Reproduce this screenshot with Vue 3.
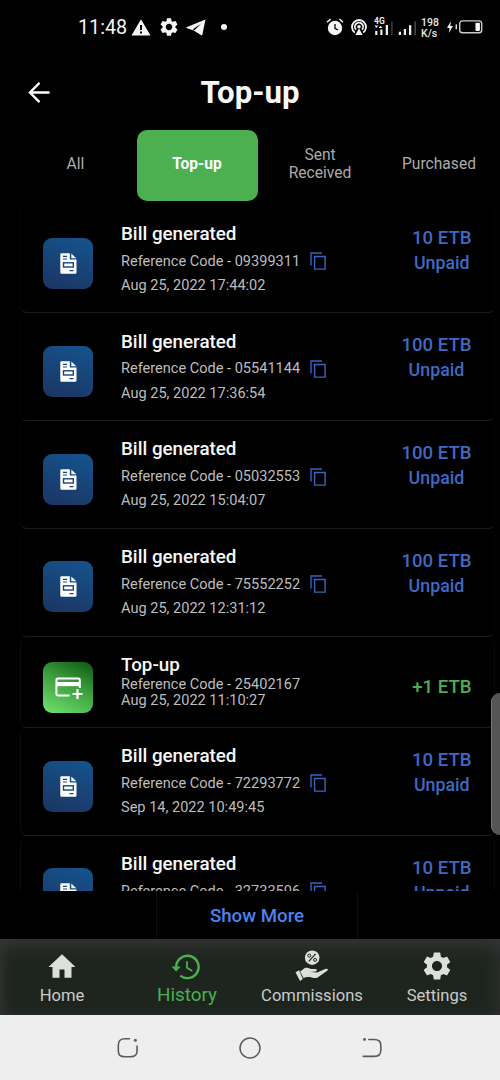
<script setup>
const bill = (code, date, amount) => ({ title: 'Bill generated', code, date, amount, unpaid: true })
const items = [
  bill('09399311', 'Aug 25, 2022 17:44:02', '10 ETB'),
  bill('05541144', 'Aug 25, 2022 17:36:54', '100 ETB'),
  bill('05032553', 'Aug 25, 2022 15:04:07', '100 ETB'),
  bill('75552252', 'Aug 25, 2022 12:31:12', '100 ETB'),
  { title: 'Top-up', code: '25402167', date: 'Aug 25, 2022 11:10:27', amount: '+1 ETB', unpaid: false },
  bill('72293772', 'Sep 14, 2022 10:49:45', '10 ETB'),
  bill('32733506', '', '10 ETB'),
]
const gear = 'M19.14 12.94c.04-.3.06-.61.06-.94 0-.32-.02-.64-.07-.94l2.03-1.58c.18-.14.23-.41.12-.61l-1.92-3.32c-.12-.22-.37-.29-.59-.22l-2.39.96c-.5-.38-1.03-.7-1.62-.94l-.36-2.54c-.04-.24-.24-.41-.48-.41h-3.84c-.24 0-.43.17-.47.41l-.36 2.54c-.59.24-1.13.57-1.62.94l-2.39-.96c-.22-.08-.47 0-.59.22L2.74 8.87c-.12.21-.08.47.12.61l2.03 1.58c-.05.3-.09.63-.09.94s.02.64.07.94l-2.03 1.58c-.18.14-.23.41-.12.61l1.92 3.32c.12.22.37.29.59.22l2.39-.96c.5.38 1.03.7 1.62.94l.36 2.54c.05.24.24.41.48.41h3.84c.24 0 .44-.17.47-.41l.36-2.54c.59-.24 1.13-.56 1.62-.94l2.39.96c.22.08.47 0 .59-.22l1.92-3.32c.12-.22.07-.47-.12-.61l-2.01-1.58z'
const hole = 'M12 15.6c-1.98 0-3.6-1.62-3.6-3.6s1.62-3.6 3.6-3.6 3.6 1.62 3.6 3.6-1.62 3.6-3.6 3.6z'
</script>

<template>
  <main class="screen">
    <div class="status">
      <span class="clock">11:48</span>
      <svg class="warn" viewBox="0 0 20 17"><path d="M10 0.3 19.5 16.5H.5Z" fill="#f5f5f5" /><path d="M9 6h2v5H9zM9 12.5h2v2H9z" fill="#000" /></svg>
      <svg class="sgear" viewBox="2 2 20 20"><path :d="gear + hole" fill="#f5f5f5" fill-rule="evenodd" /></svg>
      <svg class="plane" viewBox="0 0 20 17"><path d="M.4 8.3 19.5.5 16.4 15.4c-.2.9-.8 1.1-1.5.7L7.2 11.2 1 9.2C.2 9 .1 8.5.4 8.3Z" fill="#f5f5f5" /><path d="m6.8 10.2 8.2-5.4-6.4 6.4Z" fill="#000" /></svg>
      <i class="dot"></i>
      <span class="space"></span>
      <svg class="alarm" viewBox="0 0 18 18"><circle cx="9" cy="10" r="7.2" fill="#f5f5f5" /><path d="M1 4.2 4.6 1M17 4.2 13.4 1" stroke="#f5f5f5" stroke-width="1.5" /><path d="M9 6v4.3l3 1.7" fill="none" stroke="#000" stroke-width="1.3" /></svg>
      <svg class="hotspot" viewBox="0 0 18 18"><path d="M4.8 14.6A7 7 0 1 1 13.2 14.6M6.1 11.7A4.1 4.1 0 1 1 11.9 11.7" fill="none" stroke="#f5f5f5" stroke-width="1.8" /><path d="M9 10.6 12.7 17H5.3Z" fill="#f5f5f5" /><circle cx="9" cy="8.7" r="1.8" fill="#f5f5f5" /></svg>
      <svg class="signal1" viewBox="0 0 19 18"><text x="0" y="5.5">4G</text><path d="M.4 7.6h4l-2 2.3zM4.5 10l2-2.3 2 2.3z" fill="#eee" /><path d="M1.2 13h2.2v4H1.2zM6.3 11.5h2.2V17H6.3zM11.7 7H14v10h-2.3z" fill="#eee" /><path d="M17 3.5h1.8V17H17z" fill="#333" /></svg>
      <svg class="signal2" viewBox="0 0 19 18"><path d="M.7 13.8H3V17H.7zM5.8 11H8v6H5.8zM11 7.2h2.3V17H11z" fill="#eee" /><path d="M16.3 3.5h1.7V17h-1.7z" fill="#444" /></svg>
      <span class="speed">198<br>K/s</span>
      <svg class="battery" viewBox="0 0 37 14"><path d="M4.9 1 1 8h2.6L2.7 13 7 6H4.3Z" fill="#eee" /><path d="M10.3 4.4v4.8" stroke="#ddd" stroke-width="1.5" /><rect x="13.7" y=".9" width="22" height="11.8" rx="2.8" fill="none" stroke="#ccc" stroke-width="1.4" /><rect x="29.5" y="2.7" width="4.4" height="8.2" rx=".8" fill="#fff" /></svg>
    </div>

    <header class="head">
      <svg class="back" viewBox="0 0 24 24"><path d="M22.5 12H2M12 2 2 12l10 10" fill="none" stroke="#fff" stroke-width="2.4" /></svg>
      <h1>Top-up</h1>
    </header>

    <nav class="tabs">
      <span class="tab">All</span>
      <span class="tab active">Top-up</span>
      <span class="tab sent">Sent<br>Received</span>
      <span class="tab">Purchased</span>
    </nav>

    <section class="list">
      <article v-for="(t, i) in items" :key="t.code" class="card" :class="{ topup: !t.unpaid, green: i > 3 }">
        <div class="tile">
          <svg v-if="t.unpaid" class="doc" viewBox="0 0 17 21">
            <path d="M1.6.3h8.2v6.2h6.7v12.9a1.3 1.3 0 0 1-1.3 1.3H1.6A1.3 1.3 0 0 1 .3 19.4V1.6A1.3 1.3 0 0 1 1.6.3Z" fill="#fff" />
            <path d="M11.3.6 16.3 5.2h-5Z" fill="#fff" />
            <path d="M3 3.4h4M3 6h4M9.5 17.7h4" stroke="#1d4472" stroke-width="1.2" />
            <rect x="3.5" y="9.8" width="9.8" height="4.2" fill="none" stroke="#1d4472" stroke-width="1.4" />
          </svg>
          <svg v-else class="addcard" viewBox="0 0 28 23">
            <path d="M14.6 18.5H2.8a1.4 1.4 0 0 1-1.4-1.4V2.8a1.4 1.4 0 0 1 1.4-1.4h20.6a1.4 1.4 0 0 1 1.4 1.4V11" fill="none" stroke="#fff" stroke-width="2" />
            <path d="M1 5h24v4.2H1z" fill="#fff" />
            <path d="M22.5 12v10M17.5 17h10" stroke="#fff" stroke-width="2.2" />
          </svg>
        </div>
        <div class="info">
          <h2>{{ t.title }}</h2>
          <p>Reference Code - {{ t.code }}
            <svg v-if="t.unpaid" class="copy" viewBox="0 0 16 18"><path d="M1 13.5V1h11M4.6 4.5h10.5v12.6H4.6z" fill="none" stroke="#3b63c0" stroke-width="1.4" /></svg>
          </p>
          <p v-if="t.date">{{ t.date }}</p>
        </div>
        <div class="amount">
          <span>{{ t.amount }}</span>
          <span v-if="t.unpaid" class="state">Unpaid</span>
        </div>
      </article>
    </section>

    <div class="more"><button>Show More</button></div>

    <nav class="bottom">
      <div class="item">
        <svg class="home" viewBox="0 0 28 24"><path d="M14 .3 27.5 13h-4v10.7h-7v-8.2h-5v8.2h-7V13h-4Z" fill="#dcdfdc" /></svg>
        <span>Home</span>
      </div>
      <div class="item current">
        <svg class="history" viewBox="0 0 30 26"><path d="M5.2 13A11.2 11.2 0 1 1 9.3 21.6" fill="none" stroke="#4caf50" stroke-width="2.4" /><path d="M.5 12.6h9.2l-4.6 5Z" fill="#4caf50" /><path d="M16 7.2v6.5l5.3 3.2" fill="none" stroke="#4caf50" stroke-width="1.8" /></svg>
        <span>History</span>
      </div>
      <div class="item">
        <svg class="hand" viewBox="0 0 34 32">
          <circle cx="17.2" cy="7.7" r="7.3" fill="#dcdfdc" />
          <path d="m13.8 11.4 6.8-7.5" stroke="#1f2520" stroke-width="1.2" /><circle cx="14.3" cy="5.6" r="1.5" fill="none" stroke="#1f2520" /><circle cx="20.1" cy="9.9" r="1.5" fill="none" stroke="#1f2520" />
          <path d="M.5 22.3 4.2 20.3 7.8 28.9 5 30.9Z" fill="#dcdfdc" />
          <path d="M5.2 21.6 9.8 18c2.2-.6 4.3.3 6.3 1h4.4c1.8 0 1.8 2.2.1 2.5l-5.2.6 6.8.5L30.2 19c2.1-.8 3.7.5 2 1.8L22.6 27.5c-2 1.2-5 .4-8-.4-2.3-.5-4 .1-6.1.8Z" fill="#dcdfdc" />
        </svg>
        <span>Commissions</span>
      </div>
      <div class="item">
        <svg class="cog" viewBox="2 2 20 20"><path :d="gear + hole" fill="#dcdfdc" fill-rule="evenodd" /></svg>
        <span>Settings</span>
      </div>
    </nav>

    <div class="system">
      <svg viewBox="0 0 22 22"><path d="M12.5 1.8H8.2C3 1.8 1.3 4 1.3 8.4v5.1c0 4.8 1.8 6.2 6.7 6.2h5.3c4.9 0 6.8-1.5 6.8-6.3V9" fill="none" stroke="#5b5b5b" stroke-width="1.6" stroke-linecap="round" /><circle cx="18.4" cy="3.3" r="1.5" fill="#5b5b5b" /></svg>
      <svg viewBox="0 0 22 22"><circle cx="11" cy="11" r="10" fill="none" stroke="#5b5b5b" stroke-width="1.5" /></svg>
      <svg viewBox="0 0 22 22"><path d="M7.8 2.5h5.3c4.5 0 6.7 1.8 6.7 5.6v5.1c0 4.2-2.2 6.2-6.7 6.2H2.2" fill="none" stroke="#5b5b5b" stroke-width="1.6" stroke-linecap="round" /><circle cx="3.5" cy="2.5" r="1.4" fill="#5b5b5b" /></svg>
    </div>
    <div class="edge"></div>
  </main>
</template>

<style>
body { margin: 0; background: #000; }
</style>

<style scoped>
* { box-sizing: border-box; }
svg { display: block; flex: none; }
.screen { position: relative; width: 500px; height: 1080px; overflow: hidden; display: flex; flex-direction: column; background: #000; color: #fff; font-family: Roboto, sans-serif; }
.status { height: 54px; display: flex; align-items: center; padding: 0 17px 0 78px; flex: none; }
.clock { font-size: 19.7px; line-height: 24px; width: 53px; margin-top: 2px; color: #f5f5f5; }
.warn { width: 20px; height: 17px; }
.sgear { width: 18px; height: 18px; margin-left: 8.5px; }
.plane { width: 20px; height: 17px; margin-left: 8.5px; }
.dot { width: 6px; height: 6px; border-radius: 50%; background: #f5f5f5; margin-left: 15px; }
.space { flex: 1; }
.alarm { width: 18px; height: 18px; margin-top: -1px; }
.hotspot { width: 18px; height: 18px; margin-left: 6px; }
.signal1 { width: 19px; height: 18px; margin-left: 6px; overflow: visible; }
.signal1 text { font: 700 8.5px Roboto, sans-serif; fill: #eee; }
.signal2 { width: 19px; height: 18px; margin-left: 5px; }
.speed { font-size: 10.5px; line-height: 11px; width: 25px; margin: 2px 0 0 4px; color: #e8e8e8; font-weight: 500; }
.battery { width: 37px; height: 14px; }
.head { height: 76px; flex: none; display: grid; grid-template-columns: 60px 1fr 60px; align-items: center; }
.back { width: 23px; height: 23px; margin-left: 27.5px; }
.head h1 { margin: 1px 0 0; text-align: center; font-size: 31.2px; font-weight: 700; line-height: 37px; color: #f8f8f8; }
.tabs { height: 71px; flex: none; display: grid; grid-template-columns: 121px 121px 121px 1fr; padding-left: 15px; }
.tab { display: flex; align-items: center; justify-content: center; text-align: center; font-size: 15.6px; line-height: 17.5px; color: #acacac; padding-bottom: 2px; }
.tab.active { background: #4caf50; color: #fff; border-radius: 10px; font-weight: 700; margin: -.5px -.5px .5px .5px; padding-bottom: 1px; }
.tab.sent { padding-left: 5px; }
.list { height: 690px; flex: none; overflow: hidden; padding: 4.8px 5px 0 20px; }
.card { height: 107.7px; display: grid; grid-template-columns: 100px 1fr auto; border-radius: 7px; border: 1px solid #070707; border-bottom-color: #1b1b1b; border-top: 0; background: #000; }
.card.green { border-color: #080b08; border-bottom-color: #172017; }
.card.topup { height: 91.5px; border-bottom-color: #172017; }
.tile { width: 50px; height: 51px; margin: 32.6px 0 0 22px; border-radius: 9px; background: linear-gradient(200deg, #14548f, #1c3461); display: flex; align-items: center; justify-content: center; }
.topup .tile { margin-top: 25.4px; background: linear-gradient(205deg, #0e5d15 3%, #3e9f3d 45%, #70e371); }
.doc { width: 17px; height: 21px; }
.addcard { width: 28px; height: 23px; margin-left: 2px; margin-top: 2px; }
.info { padding-top: 17.2px; }
.info h2 { margin: 0; font-size: 18.8px; font-weight: 500; line-height: 22px; color: #f8f8f8; white-space: nowrap; }
.info p { margin: 3.8px 0 0; height: 20.5px; display: flex; align-items: center; font-size: 14.55px; line-height: 18px; color: #bdbdbd; white-space: nowrap; }
.info h2 + p { margin-top: 6.5px; }
.topup .info p { margin: 0; height: 16px; }
.topup .info h2 + p { margin-top: 1px; }
.topup .info { padding-top: 18px; }
.topup .info h2 { line-height: 21px; }
.copy { width: 16px; height: 18px; margin-left: 10px; margin-top: -1px; }
.amount { display: flex; flex-direction: column; align-items: center; padding: 19px 22.5px 0 0; font-size: 18.6px; line-height: 26px; font-weight: 500; color: #3f69c3; }
.amount .state { font-size: 17.8px; line-height: 24.5px; }
.topup .amount { padding-top: 37.8px; color: #4caf50; }
.more { height: 48px; flex: none; display: flex; justify-content: center; padding-left: 14px; }
.more button { width: 202px; border: 1px solid #0e0e0e; border-width: 0 1px; padding: 3px 0 0; background: #000; color: #4c82ed; font: 500 18.7px/45px Roboto, sans-serif; }
.bottom { height: 76px; flex: none; display: grid; grid-template-columns: repeat(4, 125px); background: #1e251f; box-shadow: inset 0 7px 18px #363636, inset 5px 0 6px #30303080; }
.item { display: flex; flex-direction: column; align-items: center; justify-content: flex-end; color: #c9ccc9; font-size: 16.6px; line-height: 20px; padding: 0 1px 9px 0; }
.item span { padding-top: 7px; }
.home { width: 28px; height: 24px; margin-bottom: 1px; }
.history { width: 30px; height: 26px; margin-right: 2px; }
.item.current { color: #4caf50; font-size: 18.9px; padding-bottom: 10.5px; }
.item.current span { padding-top: 5px; }
.hand { width: 34px; height: 32px; margin-bottom: -3px; }
.cog { width: 28px; height: 28px; margin-bottom: -1px; }
.system { height: 65px; flex: none; display: flex; justify-content: center; align-items: center; gap: 100px; background: #eee; }
.system svg { width: 22px; height: 22px; }
.edge { position: absolute; top: 693px; right: 0; width: 9px; height: 142px; border-radius: 10px 0 0 10px; background: #555; border-left: 1px solid #777; }
</style>
